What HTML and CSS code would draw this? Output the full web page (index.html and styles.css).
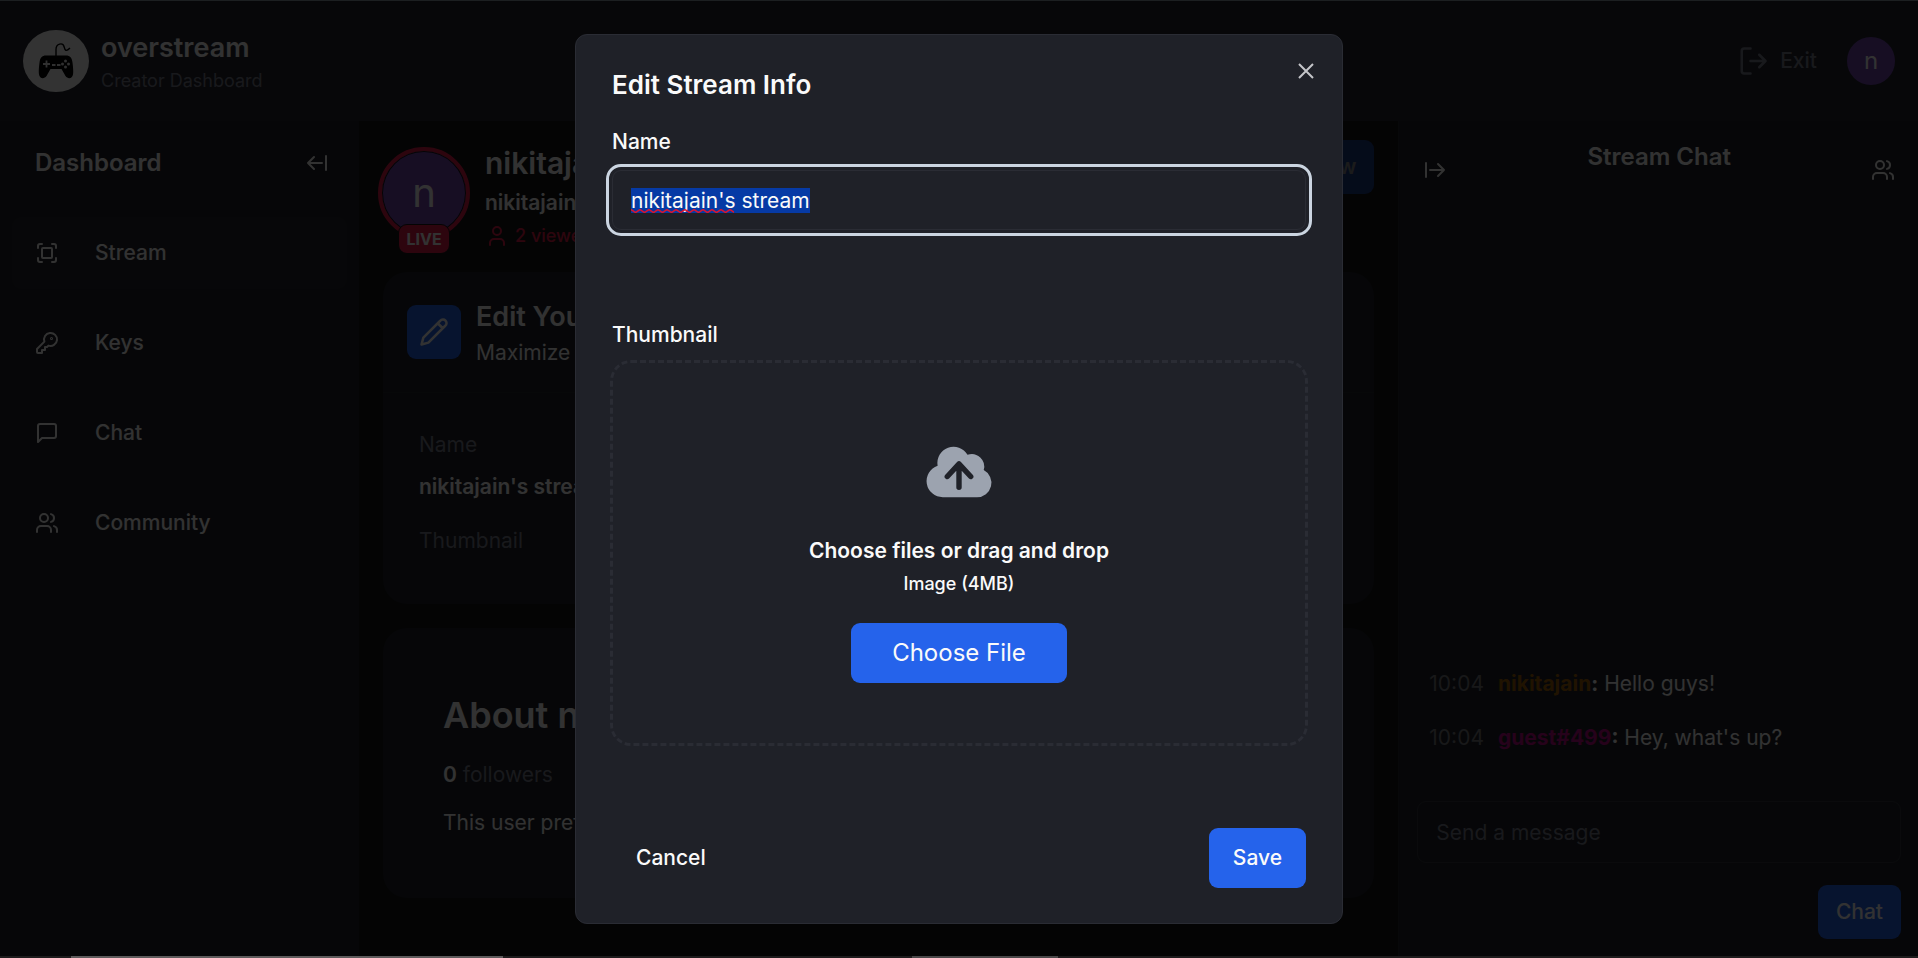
FILE: index.html
```html
<!DOCTYPE html>
<html lang="en">
<head>
<meta charset="utf-8">
<meta name="viewport" content="width=device-width, initial-scale=1">
<title>overstream – Creator Dashboard</title>
<link rel="stylesheet" href="styles.css">
</head>
<body>
<svg class="sprite" aria-hidden="true">
  <symbol id="users" viewBox="0 0 24 24"><path d="M16 21v-2a4 4 0 0 0-4-4H6a4 4 0 0 0-4 4v2"/><circle cx="9" cy="7" r="4"/><path d="M22 21v-2a4 4 0 0 0-3-3.87M16 3.13a4 4 0 0 1 0 7.75"/></symbol>
</svg>
<div class="app">
  <header class="topbar">
    <a class="brand" href="#">
      <span class="brand-mark">
        <svg viewBox="0 0 36 36" width="36" height="36" aria-hidden="true">
          <path d="M18 13V6.500C18 0 25 -.5 26 3.500S28 9 32 5" fill="none" stroke="#000" stroke-width="1.400"/>
          <path d="M8 12.500h20c4 0 6 2.500 6.500 7 .6 5 1 9 .5 12-.6 4-5 5-7.500 1.500L23.500 26h-11L8.500 33C6 36.500 1.600 35.500 1 31.500c-.5-3-.1-7 .5-12 .5-4.500 2.500-7 6.500-7z" fill="#000"/>
          <path d="M8.500 17.500v7M5 21h7M14 22h3.500M19 22h3.500" stroke="#eee" stroke-width="1.800" fill="none"/>
          <g fill="#eee"><circle cx="27.500" cy="18" r="1.500"/><circle cx="27.500" cy="24" r="1.500"/><circle cx="24.500" cy="21" r="1.500"/><circle cx="30.500" cy="21" r="1.500"/></g>
        </svg>
      </span>
      <span class="brand-text"><span class="brand-name">overstream</span><span class="brand-sub">Creator Dashboard</span></span>
    </a>
    <div class="account">
      <a class="exit" href="#">
        <svg class="icon" width="30" height="30" viewBox="0 0 24 24" aria-hidden="true"><path d="M10 22H5a2 2 0 0 1-2-2V4a2 2 0 0 1 2-2h5M17 17l5-5-5-5M22 12H10"/></svg>
        Exit
      </a>
      <button class="avatar" type="button" aria-label="Account">n</button>
    </div>
  </header>

  <div class="columns">
    <aside class="sidebar">
      <div class="sidebar-head">
        <h2>Dashboard</h2>
        <button class="icon-btn" type="button" aria-label="Collapse">
          <svg class="icon" width="24" height="24" viewBox="0 0 24 24" aria-hidden="true"><path d="M9 6l-6 6 6 6M3 12h14M21 19V5"/></svg>
        </button>
      </div>
      <nav class="nav">
        <a class="nav-item active" href="#"><svg class="icon" width="24" height="24" viewBox="0 0 24 24" aria-hidden="true"><path d="M3 7V5a2 2 0 0 1 2-2h2M17 3h2a2 2 0 0 1 2 2v2M21 17v2a2 2 0 0 1-2 2h-2M7 21H5a2 2 0 0 1-2-2v-2"/><rect x="7" y="7" width="10" height="10" rx="1"/></svg>Stream</a>
        <a class="nav-item" href="#"><svg class="icon" width="24" height="24" viewBox="0 0 24 24" aria-hidden="true"><path d="M2 18v3c0 .6.4 1 1 1h4v-3h3v-3h2l1.400-1.400a6.500 6.500 0 1 0-4-4Z"/><circle cx="16.500" cy="7.500" r=".5"/></svg>Keys</a>
        <a class="nav-item" href="#"><svg class="icon" width="24" height="24" viewBox="0 0 24 24" aria-hidden="true"><path d="M21 15a2 2 0 0 1-2 2H7l-4 4V5a2 2 0 0 1 2-2h14a2 2 0 0 1 2 2z"/></svg>Chat</a>
        <a class="nav-item" href="#"><svg class="icon" width="24" height="24" aria-hidden="true"><use href="#users"/></svg>Community</a>
      </nav>
    </aside>

    <main class="main">
      <section class="profile">
        <div class="live-avatar"><span class="live-face">n</span><span class="live-badge">LIVE</span></div>
        <div class="profile-text">
          <h1>nikitajain</h1>
          <p class="strong">nikitajain's stream</p>
          <p class="viewers"><svg class="icon" width="24" height="24" viewBox="0 0 24 24" aria-hidden="true"><path d="M19 21v-2a4 4 0 0 0-4-4H9a4 4 0 0 0-4 4v2"/><circle cx="12" cy="7" r="4"/></svg>2 viewers</p>
        </div>
        <button class="btn follow" type="button" disabled>Follow</button>
      </section>

      <section class="card">
        <div class="card-head">
          <span class="tile"><svg class="icon" width="30" height="30" viewBox="0 0 24 24" aria-hidden="true"><path d="M17 3a2.850 2.830 0 1 1 4 4L7.500 20.500 2 22l1.500-5.500ZM15 5l4 4"/></svg></span>
          <div><h2>Edit Your Stream Info</h2><p>Maximize your visibility</p></div>
        </div>
        <div class="card-body">
          <h3>Name</h3>
          <p class="strong">nikitajain's stream</p>
          <h3>Thumbnail</h3>
        </div>
      </section>

      <section class="card about">
        <h2>About nikitajain</h2>
        <p class="muted"><b>0</b> followers</p>
        <p>This user prefers to keep an air of mystery about them.</p>
      </section>
    </main>

    <aside class="chat">
      <div class="chat-head">
        <button class="icon-btn" type="button" aria-label="Collapse chat"><svg class="icon" width="24" height="24" viewBox="0 0 24 24" aria-hidden="true"><path d="M3 5v14M21 12H7M15 18l6-6-6-6"/></svg></button>
        <h2>Stream Chat</h2>
        <button class="icon-btn" type="button" aria-label="Community"><svg class="icon" width="24" height="24" aria-hidden="true"><use href="#users"/></svg></button>
      </div>
      <div class="messages">
        <p><time>10:04</time><span><b class="gold">nikitajain</b><b>:</b> Hello guys!</span></p>
        <p><time>10:04</time><span><b class="pink">guest#499</b><b>:</b> Hey, what's up?</span></p>
      </div>
      <form class="composer">
        <input type="text" placeholder="Send a message" aria-label="Send a message">
        <button class="btn" type="button">Chat</button>
      </form>
    </aside>
  </div>
</div>

<div class="overlay">
  <form class="dialog" role="dialog" aria-modal="true" aria-labelledby="dialog-title">
    <button class="close" type="button" aria-label="Close"><svg width="24" height="24" viewBox="0 0 24 24" aria-hidden="true"><path d="M5 5l14 14M19 5L5 19"/></svg></button>
    <h2 id="dialog-title">Edit Stream Info</h2>
    <div class="field">
      <label for="stream-name">Name</label>
      <div class="name-wrap">
        <input id="stream-name" type="text" value="nikitajain's stream">
        <svg class="squiggle" height="4" aria-hidden="true"><defs><pattern id="wave" width="9" height="4" patternUnits="userSpaceOnUse"><path d="M0 .5L4.500 3.500L9 .5" fill="none" stroke="#e0142c" stroke-width="1.500"/></pattern></defs><rect width="100%" height="4" fill="url(#wave)"/></svg>
      </div>
    </div>
    <div class="field">
      <label for="thumb">Thumbnail</label>
      <div class="dropzone">
        <svg class="cloud" width="72" height="72" viewBox="0 0 20 20" aria-hidden="true"><path fill="currentColor" fill-rule="evenodd" d="M5.500 17a4.500 4.500 0 0 1-1.440-8.765 4.500 4.500 0 0 1 8.302-3.046 3.500 3.500 0 0 1 4.504 4.272A4 4 0 0 1 15 17H5.500Zm3.750-2.750a.75.75 0 0 0 1.500 0V9.660l1.950 2.100a.75.75 0 1 0 1.100-1.020l-3.250-3.500a.75.75 0 0 0-1.100 0l-3.250 3.500a.75.75 0 1 0 1.100 1.020l1.950-2.100v4.590Z" clip-rule="evenodd"/></svg>
        <p class="drop-title">Choose files or drag and drop</p>
        <p class="drop-sub">Image (4MB)</p>
        <input class="file-input" id="thumb" type="file" accept="image/*">
        <label class="file-btn" for="thumb">Choose File</label>
      </div>
    </div>
    <div class="actions">
      <button class="btn ghost" type="button">Cancel</button>
      <button class="btn" type="button">Save</button>
    </div>
  </form>
</div>
<div class="dock-edge"><i></i><i></i></div>
<script src="app.js"></script>
</body>
</html>
```

FILE: app.js
```js
const nameInput = document.getElementById('stream-name');
nameInput.focus();
nameInput.select();
```

FILE: styles.css
```css
* { box-sizing: border-box; margin: 0; }
html, body { height: 100%; }
body {
  background: #141517;
  color: #fafafa;
  font: 21px/30px Inter, "Liberation Sans", sans-serif;
  overflow: hidden;
}
a { color: inherit; text-decoration: none; }
button, input { font: inherit; color: inherit; }
button { border: 0; background: none; padding: 0; }
b, .strong { font-weight: 600; }
.sprite { position: absolute; width: 0; height: 0; }
.icon { fill: none; stroke: currentColor; stroke-width: 2; stroke-linecap: round; stroke-linejoin: round; flex: none; }
.icon-btn .icon { display: block; }
.btn { height: 54px; padding: 0 18px; border-radius: 9px; background: #2563eb; font-weight: 500; }

.app { height: 100vh; display: flex; flex-direction: column; border-top: 1px solid #8d9aa5; }
.topbar { height: 120px; flex: none; display: flex; align-items: center; justify-content: space-between; padding: 0 23px; background: #252731; }
.brand { display: flex; align-items: center; gap: 12px; }
.brand-mark { width: 66px; height: 62px; border-radius: 50%; background: #fff; display: grid; place-items: center; }
.brand-text { display: flex; flex-direction: column; padding-top: 4px; }
.brand-name { font-size: 27px; line-height: 36px; font-weight: 600; }
.brand-sub { font-size: 18px; line-height: 30px; color: #7b7d8c; }
.account { display: flex; align-items: center; gap: 30px; }
.exit { display: flex; align-items: center; gap: 12px; color: #7b7d8c; font-weight: 500; }
.avatar { width: 48px; height: 48px; border-radius: 50%; background: #7347b0; font-size: 24px; }

.columns { flex: 1; min-height: 0; display: grid; grid-template-columns: 359px 2fr 1fr; }
.sidebar { background: #1f2128; }
.sidebar-head { display: flex; align-items: center; justify-content: space-between; height: 84px; padding: 0 30px 0 35px; }
.sidebar-head h2 { font-size: 24px; line-height: 36px; font-weight: 600; }
.nav { display: flex; flex-direction: column; gap: 18px; padding: 12px; }
.nav-item { display: flex; align-items: center; gap: 36px; height: 72px; padding-left: 23px; border-radius: 9px; font-weight: 500; }
.nav-item.active { background: #26262d; }

.main { padding: 18px 24px; min-width: 0; }
.profile { display: flex; align-items: flex-start; gap: 15px; height: 133px; padding-top: 1px; }
.live-avatar { position: relative; width: 92px; margin: 7px 0 0 -5px; }
.live-face { display: grid; place-items: center; width: 92px; height: 92px; border: 4px solid #e11d48; border-radius: 50%; background: #7347b0; background-clip: padding-box; box-shadow: inset 0 0 0 1px #141517; font-size: 40px; }
.live-badge { position: absolute; left: 20px; top: 77px; width: 52px; height: 30px; border: 1px solid #141517; border-radius: 9px; background: #e11d48; font-size: 16px; line-height: 28px; font-weight: 700; text-align: center; }
.profile-text { flex: 1; }
.profile h1 { font-size: 30px; line-height: 46px; font-weight: 600; }
.profile .strong { line-height: 34px; }
.viewers { display: flex; align-items: center; gap: 6px; line-height: 32px; font-size: 18px; font-weight: 500; color: #e11d48; }
.follow { opacity: .5; font-weight: 600; }
.card { border-radius: 24px; background: #1f2128; }
.card-head { display: flex; gap: 15px; height: 121px; padding: 33px 24px; border-bottom: 1px solid #26282f; }
.tile { display: grid; place-items: center; width: 54px; height: 54px; border-radius: 9px; background: #2563eb; }
.card-head div { margin-top: -7px; }
.card-head h2 { font-size: 27px; line-height: 38px; font-weight: 600; }
.card-head p { line-height: 34px; }
.card-body { height: 211px; padding: 37px 36px; }
.card-body p { margin: 12px 0 24px; }
.card-body h3 { font-size: 21px; font-weight: 400; color: #7b7d8c; }
.about { margin-top: 24px; padding: 60px; height: 270px; }
.about h2 { font-size: 36px; line-height: 54px; font-weight: 600; }
.about p { margin-top: 18px; }
.about .muted { color: #7b7d8c; }
.muted b { color: #fafafa; }

.chat { display: flex; flex-direction: column; padding: 18px 17px 19px 18px; background: #1f2128; border-left: 1px solid #26282f; }
.chat-head { display: flex; justify-content: space-between; padding: 0 6px; }
.chat-head h2 { font-size: 24px; line-height: 36px; font-weight: 600; }
.chat-head .icon-btn { margin-top: 18px; height: 26px; }
.messages { flex: 1; display: flex; flex-direction: column; justify-content: flex-end; gap: 24px; padding: 0 12px; }
.messages p { display: flex; gap: 14px; }
.messages time { color: #78797f; }
.messages b { font-weight: 700; }
.messages .gold { color: #a16207; }
.messages .pink { color: #be0a86; }
.composer { display: flex; flex-direction: column; align-items: flex-end; gap: 22px; padding-top: 48px; }
.composer input { width: 100%; height: 62px; padding: 0 18px; border: 1px solid #33363f; border-radius: 9px; background: none; }
.composer input::placeholder { color: #7b7d8c; }

.overlay { position: fixed; inset: 0; display: grid; place-items: center; background: rgba(0, 0, 0, .8); }
.dialog { position: relative; width: 768px; padding: 31px 36px 35px; border: 1px solid #2a2c34; border-radius: 12px; background: #1f2128; }
.dialog h2 { font-size: 26px; line-height: 38px; font-weight: 600; }
.close { position: absolute; top: 24px; right: 24px; width: 24px; height: 24px; }
.close svg { display: block; fill: none; stroke: #c4c5c9; stroke-width: 2; }
.field { margin-top: 23px; }
.field + .field { margin-top: 90px; }
.field > label { display: block; font-weight: 500; }
.name-wrap { position: relative; margin-top: 13px; }
.name-wrap input { display: block; width: 100%; height: 60px; padding: 0 18px; border: 1px solid #2a2c34; border-radius: 9px; background: none; outline: 3px solid #cbd5e1; outline-offset: 3px; }
.name-wrap input::selection { background: #063aa5; color: #fafafa; }
.squiggle { position: absolute; left: 19px; bottom: 17px; width: 103px; }
.dropzone { display: flex; flex-direction: column; align-items: center; margin: 10px -2px 0; height: 386px; padding-top: 73px; border: 3px dashed #2a2c34; border-radius: 21px; }
.cloud { color: #9ca3af; }
.drop-title { margin-top: 25px; font-weight: 600; line-height: 36px; }
.drop-sub { font-size: 18px; line-height: 30px; font-weight: 500; }
.file-input { position: absolute; width: 1px; height: 1px; opacity: 0; }
.file-btn { margin-top: 24px; width: 216px; height: 60px; border-radius: 9px; background: #2563eb; font-size: 24px; line-height: 60px; text-align: center; }
.actions { display: flex; justify-content: space-between; margin-top: 82px; }
.actions .btn { height: 60px; padding: 0 24px; }
.actions .ghost { background: none; }

.dock-edge { position: fixed; inset: auto 0 0; height: 2px; display: grid; grid-template-columns: 71fr 432fr 409fr 146fr 860fr; background: #1e1c1d; }
.dock-edge i { background: #5e5b5c; grid-column: 2; }
.dock-edge i + i { background: #4a4849; grid-column: 4; }
```
